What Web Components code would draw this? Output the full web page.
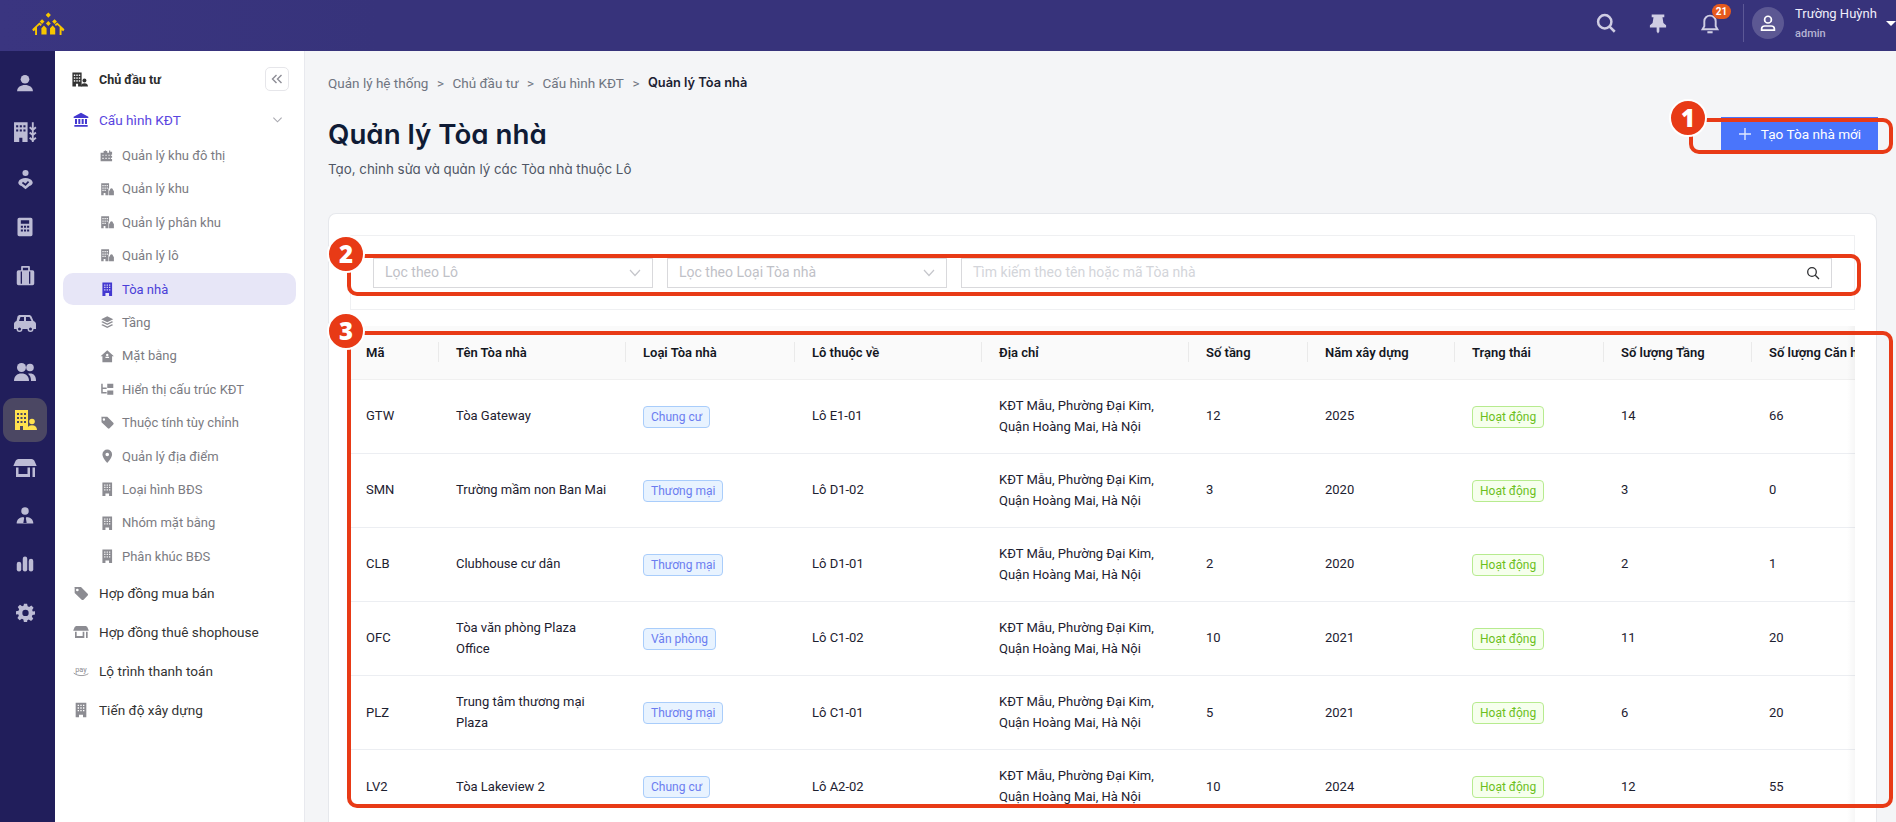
<!doctype html>
<html><head><meta charset="utf-8"><title>Quản lý Tòa nhà</title>
<style>
html,body{margin:0;padding:0;height:100%;overflow:hidden;background:#f4f5f7;font-family:Roboto,sans-serif}
app-shell{display:block}
</style></head><body>
<app-shell></app-shell>
<script>
const I={
 user:'<circle cx="12" cy="7.500" r="5.200"/><path d="M2.500 22c0-5 4.500-7.500 9.500-7.500s9.500 2.500 9.500 7.500z"/>',
 city:'<path d="M1 3h13v19H9v-4H6v4H1z"/><g fill="#211e5b"><rect x="3" y="6" width="2" height="2"/><rect x="6.500" y="6" width="2" height="2"/><rect x="10" y="6" width="2" height="2"/><rect x="3" y="10" width="2" height="2"/><rect x="6.500" y="10" width="2" height="2"/><rect x="10" y="10" width="2" height="2"/></g><path d="M19 3v19M16 8l3 2.500L22 8M16 13l3 2.500 3-2.500M16 18l3 2.500 3-2.500" fill="none" stroke="currentColor" stroke-width="1.800"/>',
 hand:'<circle cx="12" cy="4.500" r="3.500"/><path d="M4 14.500c2-5.500 14-5.500 16 0 1 2.500-1.500 4-3.500 5L12 23l-4.500-3.500c-2-1-4.500-2.500-3.500-5z"/><path d="M8.500 15.500l3.500 2.500 3.500-3.500" fill="none" stroke="#211e5b" stroke-width="2"/>',
 calc:'<path fill-rule="evenodd" d="M5 1h14a2 2 0 0 1 2 2v18a2 2 0 0 1-2 2H5a2 2 0 0 1-2-2V3a2 2 0 0 1 2-2zm2 3v4h10V4zm0 6.500v2.500h2.500v-2.500zm3.800 0v2.500h2.500v-2.500zm3.700 0v2.500H17v-2.500zM7 15v2.500h2.500V15zm3.800 0v2.500h2.500V15zm3.700 0v2.500H17V15z"/>',
 case:'<path fill-rule="evenodd" d="M8 1h8a1 1 0 0 1 1 1v4h3a2 2 0 0 1 2 2v13a2 2 0 0 1-2 2H4a2 2 0 0 1-2-2V8a2 2 0 0 1 2-2h3V2a1 1 0 0 1 1-1zm1 2v3h6V3zM6.500 7.500v14h1.500v-14zm9.500 0v14h1.500v-14z"/>',
 car:'<path fill-rule="evenodd" d="M7 4h9c1 0 2 .5 2.500 1.500l2 4.500c1.500.5 2.500 1.500 2.500 3v5h-2.500a3 3 0 0 1-6 0h-5a3 3 0 0 1-6 0H1v-5c0-1.500 1-2.500 2.500-3l1-4.500C5 4.500 6 4 7 4zm.5 2L6 10h5V6zm5.500 0v4h5.500l-2-4zM6.500 16.500a1.500 1.500 0 1 0 0 3 1.500 1.500 0 0 0 0-3zm11 0a1.500 1.500 0 1 0 0 3 1.500 1.500 0 0 0 0-3z"/>',
 people:'<circle cx="8.500" cy="7.500" r="4.500"/><circle cx="17" cy="7.500" r="3.800"/><path d="M1 21c0-5 3-7.500 7.500-7.500S16 16 16 21z"/><path d="M17 13.500c4 0 6 2.500 6 7.500h-5c0-3-.8-5.500-3-7.200.6-.2 1.300-.3 2-.3z"/>',
 owner:'<path d="M2 2h13v20H10v-4H7v4H2z"/><g fill="var(--h,#211e5b)"><rect x="4" y="5" width="2" height="2"/><rect x="7.500" y="5" width="2" height="2"/><rect x="11" y="5" width="2" height="2"/><rect x="4" y="9" width="2" height="2"/><rect x="7.500" y="9" width="2" height="2"/><rect x="11" y="9" width="2" height="2"/><rect x="4" y="13" width="2" height="2"/><rect x="7.500" y="13" width="2" height="2"/><rect x="11" y="13" width="2" height="2"/></g><circle cx="19" cy="13.500" r="2.800"/><path d="M14 22c0-3.200 2-4.800 5-4.800s5 1.600 5 4.800z"/>',
 shop:'<path d="M5.500 3h13c1.500 0 2.500 1 3 2l2 4.500V10H.5v-.5L2.500 5c.5-1 1.500-2 3-2z"/><path d="M3 11.500h2.500V18h9v-6.500H17V21H3zM19.500 11.500H22V21h-2.500z"/>',
 agent:'<circle cx="12" cy="6" r="4.500"/><path d="M2 21c0-5 4-7.500 8-7.700l1 1-1 6h4l-1-6 1-1c4 .2 8 2.700 8 7.700z"/>',
 chart:'<rect x="1" y="9" width="6" height="13" rx="3"/><rect x="9" y="2" width="6" height="20" rx="3"/><rect x="17" y="5" width="6" height="17" rx="3"/>',
 gear:'<path fill-rule="evenodd" d="M10 1h4l.7 3.200 1.900.8 2.800-1.800 2.800 2.800-1.800 2.800.8 1.900L24 10.500v4l-3.200.7-.8 1.900 1.800 2.800-2.800 2.800-2.800-1.800-1.900.8L14 24h-4l-.7-3.200-1.900-.8-2.800 1.800-2.800-2.800 1.800-2.800-.8-1.900L0 14.500v-4l3.200-.7.8-1.900L2.200 5.100 5 2.300l2.800 1.800 1.900-.8zM12 8.500a4 4 0 1 0 0 8 4 4 0 0 0 0-8z"/>',
 bank:'<path d="M12 1l11 6v2H1V7zM3 10.500h3V18H3zM8 10.500h3V18H8zM13 10.500h3V18h-3zM18 10.500h3V18h-3zM2 19.500h20V22H2z"/>',
 urban:'<path fill-rule="evenodd" d="M1 8h5V5h2V4h2v1h2v3h3V4h2v2h3v16H1zm3 3v2h2v-2zm5 0v2h2v-2zm5 0v2h2v-2zm4 0v2h2v-2zM4 16v2h2v-2zm5 0v2h2v-2zm5 0v2h2v-2zm4 0v2h2v-2z"/>',
 khu:'<path fill-rule="evenodd" d="M2 2h13v7.500a4 4 0 0 0-1 2.500v10H9v-4H6v4H2zm2 3v2h2V5zm3.500 0v2h2V5zM11 5v2h2V5zM4 9v2h2V9zm3.500 0v2h2V9zM11 9v2h2V9zM4 13v2h2v-2zm3.500 0v2h2v-2z"/><path d="M19 10.500a2.500 2.500 0 0 1 2.500 2.500v1H23v8h-8v-8h1.500v-1A2.500 2.500 0 0 1 19 10.500z"/>',
 tower:'<path fill-rule="evenodd" d="M4 1h16v22h-5v-5H9v5H4zm3 3v2h2V4zm4 0v2h2V4zm4 0v2h2V4zM7 8v2h2V8zm4 0v2h2V8zm4 0v2h2V8zM7 12v2h2v-2zm4 0v2h2v-2zm4 0v2h2v-2z"/>',
 layers:'<path d="M12 2l10 5-10 5L2 7z"/><path d="M2 11.500l2.500-1.200L12 14l7.500-3.700 2.500 1.200-10 5z"/><path d="M2 16.500l2.500-1.200L12 19l7.500-3.700 2.500 1.200-10 5z"/>',
 home:'<path fill-rule="evenodd" d="M12 2l11 10h-3v10H4V12H1zm-3 11v2h6v-2zm3-5a2 2 0 1 0 0 4 2 2 0 0 0 0-4z"/>',
 tree:'<path d="M12 3h10v7H12zM12 14h10v7H12z"/><path d="M2 3h2.500v6H11v2.500H4.500v5H11V19H2z"/>',
 tag:'<path fill-rule="evenodd" d="M2 3h10l10 10a2 2 0 0 1 0 2.800l-6.200 6.200a2 2 0 0 1-2.800 0L2.500 12V4zm4.500 2.500a2 2 0 1 0 0 4 2 2 0 0 0 0-4z"/>',
 pin:'<path fill-rule="evenodd" d="M12 1a8 8 0 0 1 8 8c0 5.500-8 14-8 14S4 14.500 4 9a8 8 0 0 1 8-8zm0 5a3 3 0 1 0 0 6 3 3 0 0 0 0-6z"/>',
 pay:'<text x="12" y="13" font-size="11" text-anchor="middle" font-family="Roboto">pay</text><path d="M1 15c6 5 16 5 22 1" fill="none" stroke="currentColor" stroke-width="1.300"/>',
 bldg:'<path fill-rule="evenodd" d="M4 1h16v22h-5v-4H9v4H4zm3 3v2h2V4zm4 0v2h2V4zm4 0v2h2V4zM7 8v2h2V8zm4 0v2h2V8zm4 0v2h2V8zM7 12v2h2v-2zm4 0v2h2v-2zm4 0v2h2v-2z"/>'
};
const svg=(n,s,x='')=>`<svg width="${s}" height="${s}" viewBox="0 0 24 24" fill="currentColor" ${x}>${I[n]}</svg>`;
const side='M0 18L7.500 11l2.500 2-1 1.500-1.500-1-2.500 2.200v8.300H3v-5L1 20z';

class AppTopbar extends HTMLElement{constructor(){super();this.attachShadow({mode:'open'}).innerHTML=`<style>
:host{display:flex;align-items:center;height:51px;padding-bottom:5px;box-sizing:border-box;background:linear-gradient(90deg,#3a3580,#37337b 20%);color:#fff;flex:none}
.logo{margin:1px 0 0 32px;width:33px;height:23px}
.sp{flex:1}
.i{color:#cfcde3;display:flex;justify-content:center;width:20px;position:relative}
.s,.p{margin-right:32px}
.b{margin-right:23px}
.badge{position:absolute;left:12px;top:-9px;background:#e65a1c;color:#fff;font:700 10px/15px Roboto;width:19px;height:15px;border-radius:8px;text-align:center}
.div{width:1px;height:38px;background:#5c5896;margin-right:8px}
.av{width:32px;height:32px;border-radius:50%;background:#5c5893;display:flex;align-items:center;justify-content:center;margin-right:11px;color:#fff}
.u{width:91px}
.n{font:13px/17px Roboto;color:#f0effa;white-space:nowrap}
.r{font:500 11px/15px Roboto;color:#b5b3d3;margin-top:3.500px}
.car{width:0;height:0;border:5px solid transparent;border-top:5px solid #fff;border-bottom:0}
</style>
<svg class="logo" viewBox="0 0 34 24" fill="#f7c600"><path d="M16.800 .5l2.700 2.700-2.700 2.700-2.700-2.700zM10.300 7.500l2.500 2.500-2.500 2.500L7.800 10zM23.300 7.500l2.500 2.500-2.500 2.500-2.500-2.500zM16.800 9.500l2.500 2.500-2.500 2.500-2.500-2.500z"/><path d="M12.300 14l2.700 3v6.500H9.600V17zM21.300 14l2.700 3v6.500h-5.400V17z"/><path d="${side}"/><path transform="matrix(-1 0 0 1 33.600 0)" d="${side}"/></svg>
<div class="sp"></div>
<div class="i s"><svg width="20" height="20" viewBox="0 0 24 24" fill="none" stroke="currentColor" stroke-width="3"><circle cx="10.500" cy="10.500" r="8"/><path d="M16 16l6.500 6.500"/></svg></div>
<div class="i p"><svg width="18" height="21" viewBox="0 0 20 22" fill="currentColor"><path d="M3 1h14v3h-2l1 6.500 3 2.500v2.500h-7.500V20L10 22l-1.500-2v-4.500H1V13l3-2.500L5 4H3z"/></svg></div>
<div class="i b"><svg width="20" height="21" viewBox="0 0 22 24" fill="none" stroke="currentColor" stroke-width="2.200"><path d="M11 3a6.500 6.500 0 0 0-6.500 6.500V15L2.500 18.500h17l-2-3.500V9.500A6.500 6.500 0 0 0 11 3z"/><path d="M8 22h6" stroke-width="2.400"/></svg><span class="badge">21</span></div>
<div class="div"></div>
<div class="av"><svg width="18" height="18" viewBox="0 0 24 24" fill="none" stroke="currentColor" stroke-width="2.300"><circle cx="12" cy="7.500" r="4.500"/><path d="M3.500 21.500v-2c0-2 2-3.500 4-3.500h9c2 0 4 1.500 4 3.500v2z"/></svg></div>
<div class="u"><div class="n">Trường Huỳnh</div><div class="r">admin</div></div>
<div class="car"></div>`;}}
customElements.define('app-topbar',AppTopbar);

class AppRail extends HTMLElement{constructor(){super();const items=[['user',20],['city',25],['hand',21],['calc',20],['case',21],['car',24],['people',24],['owner',24,true],['shop',24],['agent',20],['chart',18],['gear',19]];
this.attachShadow({mode:'open'}).innerHTML=`<style>
:host{display:flex;flex-direction:column;width:55px;background:#211e5b;flex:none;align-items:center;padding:10px 5px 0 0;box-sizing:border-box;color:#bdbcd5}
.it{width:44px;height:44px;margin-bottom:4.100px;display:flex;align-items:center;justify-content:center;border-radius:11px;flex:none}
.a{background:#4b4763;color:#ffe14f;--h:#4b4763}
</style>`+items.map(i=>`<div class="it ${i[2]?'a':''}">${svg(i[0],i[1])}</div>`).join('');}}
customElements.define('app-rail',AppRail);

class SideItem extends HTMLElement{
constructor(){super();this.attachShadow({mode:'open'}).innerHTML=`<style>
:host{display:flex;align-items:center;box-sizing:border-box;white-space:nowrap}
:host([level="1"]){height:39px;padding-left:18px;font:13.600px Roboto;color:#333;gap:10px}
:host([level="2"]){height:32px;margin:0 8px 1.400px;padding-left:37px;font:13px Roboto;color:#7b7b82;gap:7.500px;border-radius:10px}
:host([active]){background:#e7e6f7;color:#4a3fd8}
:host([open]){color:#5a45e0}
.ic{display:flex;width:16px;justify-content:center;color:#8c8c92}
:host([level="2"]) .ic{width:14.500px}
:host([active]) .ic,:host([open]) .ic{color:#4338d0}
.chev{margin-left:auto;margin-right:21px;display:none}
:host([open]) .chev{display:block}
</style><span class="ic"></span><slot></slot><svg class="chev" width="11" height="8" viewBox="0 0 12 8" fill="none" stroke="#a9a9b0" stroke-width="1.200"><path d="M1.500 1.500L6 6l4.500-4.500"/></svg>`;}
connectedCallback(){const n=this.getAttribute('icon'),l=this.getAttribute('level');this.shadowRoot.querySelector('.ic').innerHTML=svg(n,l=='1'?16:14.500);}}
customElements.define('side-item',SideItem);

class AppSidebar extends HTMLElement{constructor(){super();this.attachShadow({mode:'open'}).innerHTML=`<style>
:host{display:block;width:250px;background:#fff;border-right:1px solid #e8e9ee;flex:none;box-sizing:border-box;padding-top:16px}
.h{display:flex;align-items:center;height:24px;padding-left:16px;margin-bottom:9.500px;--h:#fff;color:#333}
.h b{font:700 12.500px Roboto;margin-left:11px;color:#2c2c2c;flex:1}
.col{width:24px;height:24px;box-sizing:border-box;border:1px solid #e6e6ea;border-radius:5px;margin-right:15px;display:flex;align-items:center;justify-content:center;color:#8d8d96}
</style>
<div class="h">${svg('owner',17)}<b>Chủ đầu tư</b><div class="col"><svg width="12" height="10" viewBox="0 0 12 10" fill="none" stroke="currentColor" stroke-width="1.400"><path d="M5.500 1L1.500 5l4 4M10.500 1l-4 4 4 4"/></svg></div></div>
<slot></slot>`;}}
customElements.define('app-sidebar',AppSidebar);

class CrumbBar extends HTMLElement{constructor(){super();this.attachShadow({mode:'open'}).innerHTML=`<style>
:host{display:flex;font:13.500px/18px Roboto;color:#6f7480;gap:8.500px;white-space:nowrap}
b{color:#1c2233;font:600 12.800px/18px Inter,sans-serif}
</style><span>Quản lý hệ thống</span><span>&gt;</span><span>Chủ đầu tư</span><span>&gt;</span><span>Cấu hình KĐT</span><span>&gt;</span><b>Quản lý Tòa nhà</b>`;}}
customElements.define('crumb-bar',CrumbBar);

class PageHead extends HTMLElement{constructor(){super();this.attachShadow({mode:'open'}).innerHTML=`<style>
:host{display:flex;justify-content:space-between;align-items:flex-start}
h1{margin:0;font:600 27.700px/36px Inter,sans-serif;font-feature-settings:"cv11";color:#0f1b35}
p{margin:7px 0 0;font:13.350px/20px Inter,sans-serif;font-feature-settings:"cv11";color:#4f5665}
button{border:0;background:#4a75fb;color:#fff;height:33px;width:157px;font:13.600px Roboto;display:flex;align-items:center;justify-content:center;gap:9px;padding:0;margin:1px -1px 0 0}
</style><div><h1>Quản lý Tòa nhà</h1><p>Tạo, chỉnh sửa và quản lý các Tòa nhà thuộc Lô</p></div>
<button><svg width="14" height="14" viewBox="0 0 14 14" stroke="#dfe7ff" stroke-width="1.400"><path d="M7 1v12M1 7h12"/></svg>Tạo Tòa nhà mới</button>`;}}
customElements.define('page-head',PageHead);

class FilterBar extends HTMLElement{constructor(){super();const chev='<svg width="12" height="8" viewBox="0 0 12 8" fill="none" stroke="#c5c6cb" stroke-width="1.200"><path d="M1 1l5 5.500L11 1"/></svg>';
this.attachShadow({mode:'open'}).innerHTML=`<style>
:host{display:flex;gap:14px;box-sizing:border-box;height:75px;border:1px solid #eff0f2;padding:22px 22px 0;font:14px Roboto;color:#bfc1c7}
.f{height:30px;box-sizing:border-box;border:1px solid #d9d9dc;display:flex;align-items:center;justify-content:space-between;padding:0 11px 2px;flex:none;width:280px;background:#fff}
.f svg{margin-top:2px}
.g{flex:1;padding-right:11px;color:#d3d5da}
</style><div class="f">Lọc theo Lô${chev}</div><div class="f">Lọc theo Loại Tòa nhà${chev}</div>
<div class="f g">Tìm kiếm theo tên hoặc mã Tòa nhà<svg width="14" height="14" viewBox="0 0 14 14" fill="none" stroke="#2f3033" stroke-width="1.300"><circle cx="6" cy="6" r="4.300"/><path d="M9.300 9.300L13 13"/></svg></div>`;}}
customElements.define('filter-bar',FilterBar);

class StatusTag extends HTMLElement{constructor(){super();this.attachShadow({mode:'open'}).innerHTML=`<style>
:host{display:inline-block;font:12px/20px Roboto;padding:0 7px;border:1px solid #a9cdfb;background:#e8f3ff;color:#6b7df0;border-radius:4px;white-space:nowrap;vertical-align:middle}
:host([ok]){border-color:#b7eb8f;background:#f6ffed;color:#6cc01c}
</style><slot></slot>`;}}
customElements.define('status-tag',StatusTag);

class DataTable extends HTMLElement{constructor(){super();
const A='KĐT Mẫu, Phường Đại Kim,<br>Quận Hoàng Mai, Hà Nội';
const rows=[['GTW','Tòa Gateway','Chung cư','Lô E1-01','12','2025','14','66'],['SMN','Trường mầm non Ban Mai','Thương mại','Lô D1-02','3','2020','3','0'],['CLB','Clubhouse cư dân','Thương mại','Lô D1-01','2','2020','2','1'],['OFC','Tòa văn phòng Plaza Office','Văn phòng','Lô C1-02','10','2021','11','20'],['PLZ','Trung tâm thương mại Plaza','Thương mại','Lô C1-01','5','2021','6','20'],['LV2','Tòa Lakeview 2','Chung cư','Lô A2-02','10','2024','12','55']];
const cols=[90,187,169,187,207,119,147,149,148,150];
const heads=['Mã','Tên Tòa nhà','Loại Tòa nhà','Lô thuộc về','Địa chỉ','Số tầng','Năm xây dựng','Trạng thái','Số lượng Tầng','Số lượng Căn hộ'];
this.attachShadow({mode:'open'}).innerHTML=`<style>
:host{display:block;overflow:hidden;position:relative;margin-top:16px;height:600px;font:13px/20.800px Roboto,sans-serif;color:#1d2130}
table{border-collapse:collapse;table-layout:fixed;width:1553px}
th{height:53.500px;padding:0 16px;background:#fafafa;text-align:left;font:600 13px/18px Roboto,sans-serif;color:#14171f;border-bottom:1px solid #f0f0f0;position:relative;white-space:nowrap;overflow:hidden;box-sizing:border-box}
th:not(:last-child)::after{content:"";position:absolute;right:1px;top:16px;height:20px;width:1px;background:#eaeaea}
td{padding:15.750px 16px;height:74px;box-sizing:border-box;border-bottom:1px solid #eceef2;vertical-align:middle}
.sh{position:absolute;top:0;bottom:0;right:0;width:8px;background:linear-gradient(90deg,transparent,rgba(0,0,0,.035));pointer-events:none}
</style><table><colgroup>${cols.map(c=>`<col style="width:${c}px">`).join('')}</colgroup>
<thead><tr>${heads.map(h=>`<th>${h}</th>`).join('')}</tr></thead>
<tbody>${rows.map(r=>`<tr><td>${r[0]}</td><td>${r[1]}</td><td><status-tag>${r[2]}</status-tag></td><td>${r[3]}</td><td>${A}</td><td>${r[4]}</td><td>${r[5]}</td><td><status-tag ok>Hoạt động</status-tag></td><td>${r[6]}</td><td>${r[7]}</td></tr>`).join('')}</tbody></table><div class="sh"></div>`;}}
customElements.define('data-table',DataTable);

class AnnoBox extends HTMLElement{constructor(){super();this.attachShadow({mode:'open'}).innerHTML=`<style>
:host{position:absolute;box-sizing:border-box;border:4px solid #e83a16;border-radius:10px;pointer-events:none}
.n{position:absolute;left:-24px;top:-23px;width:38px;height:38px;box-sizing:border-box;border-radius:50%;background:#e83a16;border:2px solid #fff;color:#fff;font:800 24px/33px "Open Sans",sans-serif;text-align:center}
</style><div class="n"><slot></slot></div>`;}}
customElements.define('anno-box',AnnoBox);

class AppShell extends HTMLElement{constructor(){super();
const sub=[['urban','Quản lý khu đô thị'],['khu','Quản lý khu'],['khu','Quản lý phân khu'],['khu','Quản lý lô'],['tower','Tòa nhà',1],['layers','Tầng'],['home','Mặt bằng'],['tree','Hiển thị cấu trúc KĐT'],['tag','Thuộc tính tùy chỉnh'],['pin','Quản lý địa điểm'],['bldg','Loại hình BĐS'],['bldg','Nhóm mặt bằng'],['bldg','Phân khúc BĐS']];
this.attachShadow({mode:'open'}).innerHTML=`<style>
:host{display:flex;flex-direction:column;width:1896px;height:822px;overflow:hidden;position:relative}
.b{display:flex;flex:1;min-height:0}
main{flex:1;padding:23px 19px 0 23px;box-sizing:border-box;background:#f4f5f7;min-width:0}
page-head{margin-top:24px}
.card{margin-top:34px;height:640px;background:#fff;border:1px solid #e6e8ec;border-bottom:0;border-radius:8px 8px 0 0;padding:21px 21px 0;box-sizing:border-box}
</style>
<app-topbar></app-topbar>
<div class="b"><app-rail></app-rail>
<app-sidebar>
<side-item level="1" icon="bank" open>Cấu hình KĐT</side-item>
${sub.map(s=>`<side-item level="2" icon="${s[0]}" ${s[2]?'active':''}>${s[1]}</side-item>`).join('')}
<side-item level="1" icon="tag">Hợp đồng mua bán</side-item>
<side-item level="1" icon="shop">Hợp đồng thuê shophouse</side-item>
<side-item level="1" icon="pay">Lộ trình thanh toán</side-item>
<side-item level="1" icon="bldg">Tiến độ xây dựng</side-item>
</app-sidebar>
<main><crumb-bar></crumb-bar><page-head></page-head>
<div class="card"><filter-bar></filter-bar><data-table></data-table></div>
</main></div>
<anno-box style="left:1689px;top:118px;width:204px;height:36px">1</anno-box>
<anno-box style="left:347px;top:254px;width:1514px;height:42px">2</anno-box>
<anno-box style="left:347px;top:331px;width:1546px;height:477px">3</anno-box>`;}}
customElements.define('app-shell',AppShell);
</script></body></html>
